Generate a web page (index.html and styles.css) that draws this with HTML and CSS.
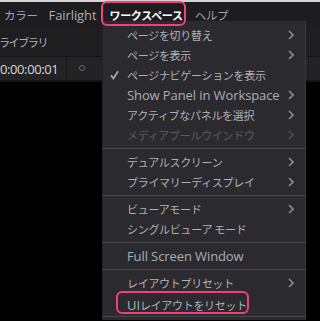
FILE: index.html
```html
<!DOCTYPE html>
<html lang="ja">
<head>
<meta charset="utf-8"/>
<title>ワークスペース</title>
<link rel="stylesheet" href="styles.css">
</head>
<body>
<div class="topStrip"></div>
<div class="menubar">
  <span class="mb ja">カラー</span>
  <span class="mb en">Fairlight</span>
  <span class="mb ja active">ワークスペース</span>
  <span class="mb ja">ヘルプ</span>
</div>
<div class="toolbar"><span class="ja">ライブラリ</span></div>
<div class="timerow">
  <span class="tc">0:00:00:01</span>
  <span class="ring"></span>
</div>
<div class="stage"></div>

<div class="menu">
  <div class="item"><span></span><span class="ja">ページを切り替え</span><svg class="chev" viewBox="0 0 6 10"><polyline points="1,1 5,5 1,9"/></svg></div>
  <div class="item"><span></span><span class="ja">ページを表示</span><svg class="chev" viewBox="0 0 6 10"><polyline points="1,1 5,5 1,9"/></svg></div>
  <div class="item"><svg class="check" viewBox="0 0 10 10"><polyline points="1,5.5 3.8,8.8 9,0.8"/></svg><span class="ja">ページナビゲーションを表示</span><span></span></div>
  <div class="item"><span></span><span class="en">Show Panel in Workspace</span><svg class="chev" viewBox="0 0 6 10"><polyline points="1,1 5,5 1,9"/></svg></div>
  <div class="item"><span></span><span class="ja">アクティブなパネルを選択</span><svg class="chev" viewBox="0 0 6 10"><polyline points="1,1 5,5 1,9"/></svg></div>
  <div class="item off"><span></span><span class="ja">メディアプールウインドウ</span><svg class="chev" viewBox="0 0 6 10"><polyline points="1,1 5,5 1,9"/></svg></div>
  <div class="sep"></div>
  <div class="item"><span></span><span class="ja">デュアルスクリーン</span><svg class="chev" viewBox="0 0 6 10"><polyline points="1,1 5,5 1,9"/></svg></div>
  <div class="item"><span></span><span class="ja">プライマリーディスプレイ</span><svg class="chev" viewBox="0 0 6 10"><polyline points="1,1 5,5 1,9"/></svg></div>
  <div class="sep"></div>
  <div class="item"><span></span><span class="ja">ビューアモード</span><svg class="chev" viewBox="0 0 6 10"><polyline points="1,1 5,5 1,9"/></svg></div>
  <div class="item"><span></span><span class="ja">シングルビューア モード</span><span></span></div>
  <div class="sep"></div>
  <div class="item"><span></span><span class="en">Full Screen Window</span><span></span></div>
  <div class="sep"></div>
  <div class="item"><span></span><span class="ja">レイアウトプリセット</span><svg class="chev" viewBox="0 0 6 10"><polyline points="1,1 5,5 1,9"/></svg></div>
  <div class="item"><span></span><span><span class="en">UI</span><span class="ja">レイアウトをリセット</span></span><span></span></div>
  <div class="sep"></div>
</div>

<div class="mark markTop"></div>
<div class="mark markReset"></div>
</body>
</html>
```

FILE: styles.css
```css
body { margin: 0; background: #000; font-family: "Open Sans", "Noto Sans CJK JP", sans-serif; overflow: hidden; }
.ja { font-family: "Noto Sans CJK JP", sans-serif; font-size: 11px; letter-spacing: -0.3px; }
.en { font-family: "Open Sans", sans-serif; font-size: 13px; letter-spacing: -0.1px; }

.topStrip { height: 2px; background: #d4d4d6; }
.menubar { height: 25px; background: #1d1d20; display: flex; align-items: center; gap: 12px; padding-left: 4px; color: #a3a4a9; }
.menubar .ja { font-size: 11.5px; }
.menubar .en { color: #a7adb8; margin-left: -1px; }
.menubar .active { color: #fff; font-weight: bold; font-size: 11px; letter-spacing: -0.3px; margin-left: 1px; }
.toolbar { height: 30px; background: #1e1e21; display: flex; align-items: center; color: #b2b2b6; margin-left: -1px; border-bottom: 1px solid #141416; box-sizing: border-box; }
.toolbar .ja { font-size: 11px; letter-spacing: -1.4px; }
.timerow { height: 25px; background: #232326; border-bottom: 2px solid #141416; display: flex; align-items: center; box-sizing: border-box; }
.tc { font-family: "Open Sans", sans-serif; font-size: 13px; letter-spacing: -0.4px; color: #d8d8da; width: 67px; height: 100%; display: flex; align-items: center; border-right: 1px solid #141416; box-sizing: border-box; }
.ring { width: 4px; height: 4px; border: 1px solid #6c6c70; border-radius: 50%; margin-left: 12px; margin-top: -2px; }

.menu { position: absolute; left: 102px; top: 21px; width: 204px; background: #2b2b2f; border-right: 1px solid #3a3a3e; border-left: 1px solid #232326; box-sizing: border-box; padding-top: 4px; }
.item { height: 20px; display: grid; grid-template-columns: 24px 1fr 14px; align-items: center; color: #b0b1b6; padding-right: 9px; }
.item .en { color: #a9adb5; }
.item.off { color: #5b5b60; }
.item.off .chev { stroke: #4c4c50; }
.sep { height: 7px; position: relative; }
.sep::after { content: ""; position: absolute; left: -1px; right: -1px; top: 3px; height: 1px; background: #46464b; }
.chev { width: 6px; height: 10px; fill: none; stroke: #8b8b90; stroke-width: 1.6; justify-self: end; margin-right: 2px; }
.check { width: 9px; height: 10px; fill: none; stroke: #a4a4a8; stroke-width: 2; margin-left: 7px; }

.mark { position: absolute; border: 2.5px solid #f33f7c; border-radius: 6px; box-sizing: border-box; }
.markTop { left: 101px; top: 1px; width: 85px; height: 25px; }
.markReset { left: 116px; top: 291px; width: 133px; height: 23px; }
```
